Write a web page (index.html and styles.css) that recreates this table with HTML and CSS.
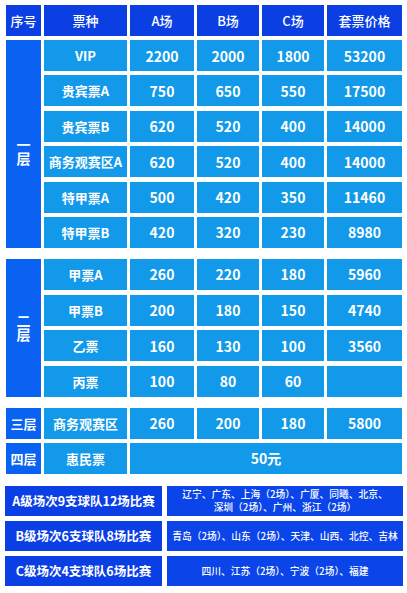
FILE: index.html
```html
<!DOCTYPE html>
<html lang="zh">
<head>
<meta charset="utf-8">
<link rel="stylesheet" href="styles.css">
</head>
<body>
<div class="page">
  <div class="grid head">
    <div class="h">序号</div>
    <div class="h">票种</div>
    <div class="h">A场</div>
    <div class="h">B场</div>
    <div class="h">C场</div>
    <div class="h">套票价格</div>
  </div>

  <div class="grid g1">
    <div class="lbl span6 low"><span class="vt">一层</span></div>
    <div class="c t">VIP</div><div class="c">2200</div><div class="c">2000</div><div class="c">1800</div><div class="c">53200</div>
    <div class="c t">贵宾票A</div><div class="c">750</div><div class="c">650</div><div class="c">550</div><div class="c">17500</div>
    <div class="c t">贵宾票B</div><div class="c">620</div><div class="c">520</div><div class="c">400</div><div class="c">14000</div>
    <div class="c t">商务观赛区A</div><div class="c">620</div><div class="c">520</div><div class="c">400</div><div class="c">14000</div>
    <div class="c t">特甲票A</div><div class="c">500</div><div class="c">420</div><div class="c">350</div><div class="c">11460</div>
    <div class="c t">特甲票B</div><div class="c">420</div><div class="c">320</div><div class="c">230</div><div class="c">8980</div>
  </div>

  <div class="grid g2">
    <div class="lbl span4"><span class="vt">二层</span></div>
    <div class="c t">甲票A</div><div class="c">260</div><div class="c">220</div><div class="c">180</div><div class="c">5960</div>
    <div class="c t">甲票B</div><div class="c">200</div><div class="c">180</div><div class="c">150</div><div class="c">4740</div>
    <div class="c t">乙票</div><div class="c">160</div><div class="c">130</div><div class="c">100</div><div class="c">3560</div>
    <div class="c t">丙票</div><div class="c">100</div><div class="c">80</div><div class="c">60</div><div class="c"></div>
  </div>

  <div class="grid g3">
    <div class="lbl row">三层</div>
    <div class="c t">商务观赛区</div><div class="c">260</div><div class="c">200</div><div class="c">180</div><div class="c">5800</div>
    <div class="lbl row">四层</div>
    <div class="c t">惠民票</div><div class="c wide">50元</div>
  </div>

  <div class="games">
    <div class="gl">A级场次9支球队12场比赛</div>
    <div class="gr"><span>辽宁、广东、上海（2场）、广厦、同曦、北京、</span><span>深圳（2场）、广州、浙江（2场）</span></div>
    <div class="gl">B级场次6支球队8场比赛</div>
    <div class="gr"><span>青岛（2场）、山东（2场）、天津、山西、北控、吉林</span></div>
    <div class="gl">C级场次4支球队6场比赛</div>
    <div class="gr"><span>四川、江苏（2场）、宁波（2场）、福建</span></div>
  </div>
</div>
</body>
</html>
```

FILE: styles.css
```css
html, body {
  margin: 0;
  padding: 0;
  background: #ffffff;
}

body {
  font-family: "Noto Sans CJK SC", "Noto Sans", sans-serif;
  color: #ffffff;
  width: 407px;
  height: 593px;
  overflow: hidden;
}

.page {
  padding: 5px 5px 0 6px;
  display: flex;
  flex-direction: column;
}

.grid {
  display: grid;
  grid-template-columns: 35px 83px 64px 62px 62px 75px;
  column-gap: 3px;
}

.head {
  grid-auto-rows: 31px;
  margin-bottom: 4px;
}

.h {
  background: #0b3fe4;
  display: flex;
  align-items: center;
  justify-content: center;
  font-size: 13px;
  font-weight: 500;
  line-height: 1;
}

.g1 {
  grid-auto-rows: 31px;
  row-gap: 4.4px;
  margin-bottom: 11px;
}

.g2 {
  grid-auto-rows: 31px;
  row-gap: 4.67px;
  margin-bottom: 11px;
}

.g3 {
  grid-auto-rows: 31px;
  row-gap: 4px;
}

.lbl {
  background: #0a62f2;
  display: flex;
  align-items: center;
  justify-content: center;
  font-size: 14px;
  font-weight: 700;
  line-height: 1;
  grid-column: 1;
}

.vt {
  writing-mode: vertical-rl;
  text-orientation: upright;
  line-height: 1;
}

.lbl.low {
  padding-top: 16px;
}

.lbl.row {
  font-size: 13px;
}

.span6 { grid-row: span 6; }
.span4 { grid-row: span 4; }

.c {
  background: #1299e9;
  display: flex;
  align-items: center;
  justify-content: center;
  font-size: 14px;
  font-weight: 700;
  line-height: 1;
}

.c.t {
  font-size: 13px;
}

.c.wide {
  grid-column: 3 / 7;
}

.games {
  margin: 12px 0 0 -1px;
  display: grid;
  grid-template-columns: 157px 236px;
  grid-auto-rows: 30.5px;
  column-gap: 5px;
  row-gap: 4.5px;
}

.gl {
  background: #0b3fe6;
  display: flex;
  align-items: center;
  justify-content: center;
  font-size: 12.5px;
  font-weight: 700;
  line-height: 1;
}

.gr {
  background: #0b45ea;
  display: flex;
  flex-direction: column;
  align-items: center;
  justify-content: center;
  font-size: 9.75px;
  font-weight: 500;
  line-height: 13px;
  overflow: hidden;
  white-space: nowrap;
}
```
